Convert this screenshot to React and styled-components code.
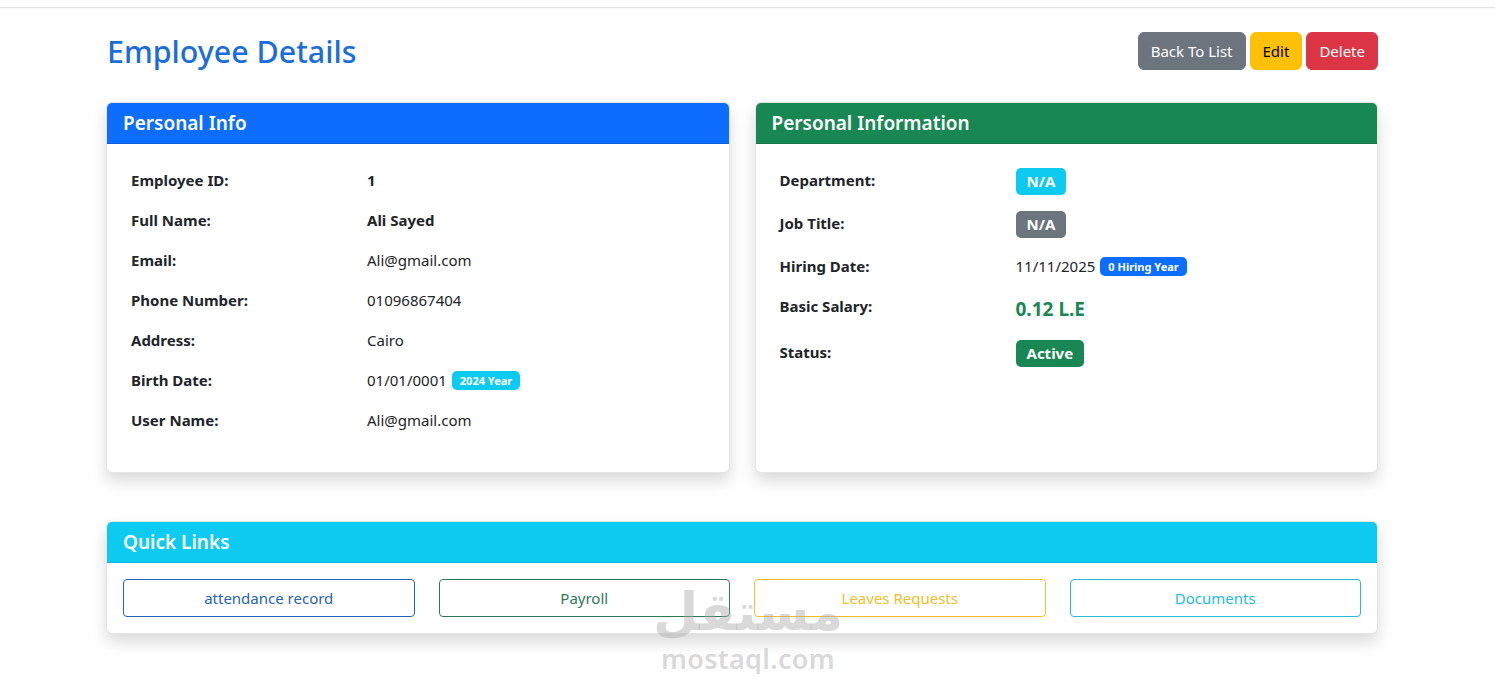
import React from "react";
import styled, { createGlobalStyle } from "styled-components";

const GlobalStyle = createGlobalStyle`
  * { box-sizing: border-box; }
  body {
    margin: 0;
    background: #fff;
    color: #212529;
    font-family: "Noto Sans", "Open Sans", sans-serif;
    font-size: 16px;
    line-height: 1.5;
  }
`;

const colors = {
  primary: "#0d6efd",
  secondary: "#6c757d",
  success: "#198754",
  warning: "#ffc107",
  danger: "#dc3545",
  info: "#0dcaf0",
};

const TopBar = styled.div`
  height: 8px;
  border-bottom: 1px solid #e3e3e3;
  box-shadow: 0 1px 2px rgba(0, 0, 0, 0.04);
`;

const Page = styled.div`
  position: relative;
  padding: 24px 117px 40px 106px;
`;

const Header = styled.div`
  display: flex;
  justify-content: space-between;
  align-items: flex-start;
  margin-bottom: 32px;
`;

const Title = styled.h2`
  margin: 2px 0 0 1px;
  font-size: 30.4px;
  font-weight: 500;
  line-height: 1.2;
  color: #1a6ddb;
`;

const Actions = styled.div`
  display: flex;
  gap: 4px;
`;

const Button = styled.button`
  font-family: inherit;
  font-size: 15px;
  line-height: 24px;
  padding: 6px 12px;
  border: 1px solid ${({ $bg }) => $bg};
  border-radius: 6px;
  background: ${({ $bg }) => $bg};
  color: ${({ $dark }) => ($dark ? "#000" : "#fff")};
  cursor: pointer;
`;

const CardsRow = styled.div`
  display: grid;
  grid-template-columns: 1fr 1fr;
  gap: 25px;
  margin-bottom: 48px;
`;

const Card = styled.div`
  background: #fff;
  border: 1px solid rgba(0, 0, 0, 0.1);
  border-radius: 6px;
  box-shadow: 0 8px 16px rgba(0, 0, 0, 0.15);
  overflow: hidden;
`;

const CardHeader = styled.div`
  background: ${({ $bg }) => $bg};
  color: #fff;
  padding: 8px 16px;
  font-size: 19px;
  font-weight: 600;
  line-height: 24px;
  border-bottom: 1px solid rgba(0, 0, 0, 0.12);
`;

const CardBody = styled.div`
  padding: 24px 24px 24px;
`;

const InfoRow = styled.div`
  display: grid;
  grid-template-columns: ${({ $label }) => $label}px 1fr;
  align-items: start;
  margin-bottom: 16px;
  font-size: 15px;
`;

const Label = styled.span`
  font-weight: 700;
  line-height: 24px;
`;

const Value = styled.span`
  line-height: 24px;
  font-weight: ${({ $bold }) => ($bold ? 700 : 400)};
  display: flex;
  align-items: center;
  gap: 5px;
`;

const Badge = styled.span`
  display: inline-block;
  background: ${({ $bg }) => $bg};
  color: #fff;
  font-weight: 700;
  border-radius: 5px;
  font-size: ${({ $small }) => ($small ? "11px" : "15px")};
  line-height: 1;
  padding: ${({ $small }) => ($small ? "4px 8px" : "6px 11px 6px")};
  white-space: nowrap;
`;

const Salary = styled.span`
  font-size: 19px;
  font-weight: 700;
  color: ${colors.success};
  line-height: 30px;
`;

const LinksBody = styled.div`
  display: grid;
  grid-template-columns: repeat(4, 1fr);
  gap: 24px;
  padding: 16px 16px 16px;
`;

const OutlineLink = styled.a`
  display: block;
  text-align: center;
  text-decoration: none;
  font-size: 15px;
  line-height: 24px;
  padding: 6px 12px;
  border: 1px solid ${({ $c }) => $c};
  border-radius: 4px;
  color: ${({ $c }) => $c};
`;

const Watermark = styled.div`
  position: absolute;
  left: 656px;
  top: 568px;
  width: 184px;
  display: flex;
  flex-direction: column;
  align-items: center;
  color: rgba(170, 170, 170, 0.45);
  font-family: "Noto Sans", "DejaVu Sans", sans-serif;
  font-weight: 700;
  pointer-events: none;
`;

const WmArabic = styled.div`
  font-size: 52px;
  line-height: 68px;
  height: 68px;
`;

const WmLatin = styled.div`
  font-size: 27px;
  line-height: 30px;
  font-weight: 600;
  letter-spacing: 0.3px;
`;

const personal = [
  ["Employee ID:", "1", true],
  ["Full Name:", "Ali Sayed", true],
  ["Email:", "Ali@gmail.com"],
  ["Phone Number:", "01096867404"],
  ["Address:", "Cairo"],
  ["Birth Date:", "01/01/0001", false, "2024 Year"],
  ["User Name:", "Ali@gmail.com"],
];

const links = [
  ["attendance record", "#2563b8"],
  ["Payroll", "#2f7a55"],
  ["Leaves Requests", "#f0c02a"],
  ["Documents", "#26bcd8"],
];

export default function App() {
  return (
    <>
      <GlobalStyle />
      <TopBar />
      <Page>
        <Header>
          <Title>Employee Details</Title>
          <Actions>
            <Button $bg={colors.secondary}>Back To List</Button>
            <Button $bg={colors.warning} $dark>
              Edit
            </Button>
            <Button $bg={colors.danger}>Delete</Button>
          </Actions>
        </Header>

        <CardsRow>
          <Card>
            <CardHeader $bg={colors.primary}>Personal Info</CardHeader>
            <CardBody>
              {personal.map(([label, value, bold, badge]) => (
                <InfoRow key={label} $label={236}>
                  <Label>{label}</Label>
                  <Value $bold={bold}>
                    {value}
                    {badge && (
                      <Badge $bg={colors.info} $small>
                        {badge}
                      </Badge>
                    )}
                  </Value>
                </InfoRow>
              ))}
            </CardBody>
          </Card>

          <Card>
            <CardHeader $bg={colors.success}>Personal Information</CardHeader>
            <CardBody>
              <InfoRow $label={236}>
                <Label>Department:</Label>
                <Value>
                  <Badge $bg={colors.info}>N/A</Badge>
                </Value>
              </InfoRow>
              <InfoRow $label={236}>
                <Label>Job Title:</Label>
                <Value>
                  <Badge $bg={colors.secondary}>N/A</Badge>
                </Value>
              </InfoRow>
              <InfoRow $label={236}>
                <Label>Hiring Date:</Label>
                <Value>
                  11/11/2025
                  <Badge $bg={colors.primary} $small>
                    0 Hiring Year
                  </Badge>
                </Value>
              </InfoRow>
              <InfoRow $label={236}>
                <Label>Basic Salary:</Label>
                <Value>
                  <Salary>0.12 L.E</Salary>
                </Value>
              </InfoRow>
              <InfoRow $label={236}>
                <Label>Status:</Label>
                <Value>
                  <Badge $bg={colors.success}>Active</Badge>
                </Value>
              </InfoRow>
            </CardBody>
          </Card>
        </CardsRow>

        <Card>
          <CardHeader $bg={colors.info}>Quick Links</CardHeader>
          <LinksBody>
            {links.map(([text, c]) => (
              <OutlineLink key={text} href="#" $c={c}>
                {text}
              </OutlineLink>
            ))}
          </LinksBody>
        </Card>

        <Watermark>
          <WmArabic>مستقل</WmArabic>
          <WmLatin>mostaql.com</WmLatin>
        </Watermark>
      </Page>
    </>
  );
}
